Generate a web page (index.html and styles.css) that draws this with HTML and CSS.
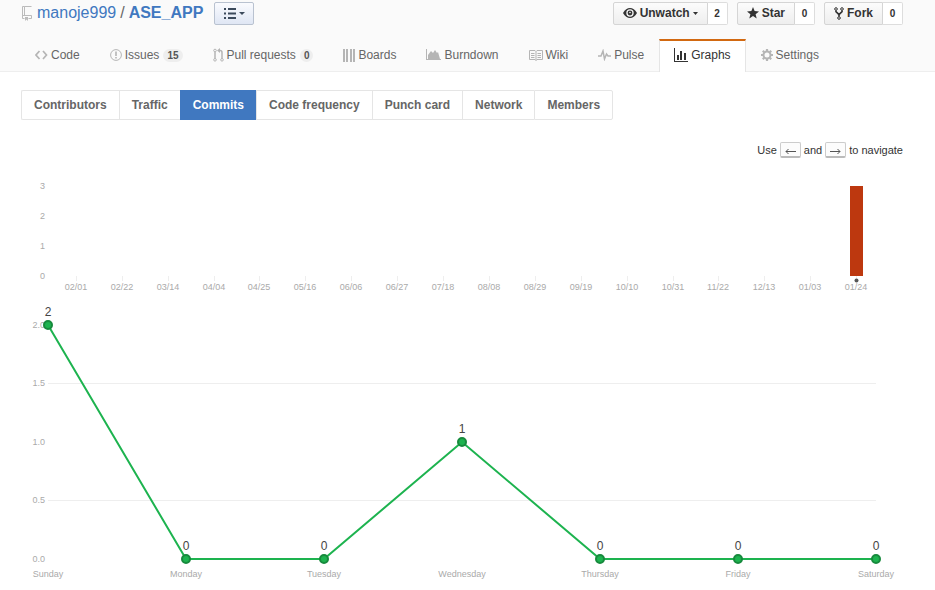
FILE: index.html
```html
<!DOCTYPE html>
<html lang="en">
<head>
<meta charset="utf-8">
<title>Commits · manoje999/ASE_APP</title>
<link rel="stylesheet" href="styles.css">
</head>
<body>
<header class="pagehead">
  <div class="titlebar">
    <h1 class="title">
      <svg class="repo" width="12" height="16" viewBox="0 0 12 16" fill="none" stroke="#bbb"><path d="M3.500 1.500h-2v12h2M3.500 1.500h7M3.500 1.500v9M1.500 10.500h9M10.500 10.500v3h-3"/><path d="M4 12h3v4l-1.500-1.500L4 16z" fill="#bbb" stroke="none"/></svg>
      <a href="#owner">manoje999</a><span class="slash">/</span><a class="name" href="#repo">ASE_APP</a>
    </h1>
    <button class="listbtn" type="button" aria-label="Lists">
      <svg width="12" height="11" viewBox="0 0 12 11" fill="#3c4a5c"><path d="M0 0h2v2H0zM4 0h8v2H4zM0 4.500h2v2H0zM4 4.500h8v2H4zM0 9h2v2H0zM4 9h8v2H4z"/></svg>
      <svg width="6" height="3" viewBox="0 0 6 3" fill="#3c4a5c"><path d="M0 0h6L3 3z"/></svg>
    </button>
    <div class="actions">
      <div class="action">
        <button type="button"><svg width="14" height="12" viewBox="0 0 14 12"><path d="M0 6C2 2.500 4.300 1 7 1s5 1.500 7 5c-2 3.500-4.300 5-7 5S2 9.500 0 6z" fill="#333"/><circle cx="7" cy="6" r="3.700" fill="#f5f5f5"/><circle cx="7" cy="6" r="2.400" fill="#333"/><circle cx="7" cy="5.500" r=".8" fill="#f5f5f5"/></svg>Unwatch<svg width="5" height="3" viewBox="0 0 5 3" fill="#333"><path d="M0 0h5L2.500 3z"/></svg></button><a href="#watchers">2</a>
      </div>
      <div class="action">
        <button type="button"><svg width="12" height="12" viewBox="0 0 12 12" fill="#333"><path d="M6 0l1.600 4.100 4.400.300-3.400 2.800L9.700 11.500 6 9.100 2.300 11.500 3.400 7.200 0 4.400l4.400-.300z"/></svg>Star</button><a href="#stars">0</a>
      </div>
      <div class="action">
        <button type="button"><svg width="10" height="13" viewBox="0 0 10 13" fill="none" stroke="#333"><circle cx="2" cy="2" r="1.300"/><circle cx="8" cy="2" r="1.300"/><circle cx="5" cy="11" r="1.300"/><path d="M2 3.500v1.200L5 7.500l3-2.800V3.500M5 7.500v2" stroke-width="1.700"/></svg>Fork</button><a href="#forks">0</a>
      </div>
    </div>
  </div>
  <nav class="reponav">
    <a href="#code"><svg width="13" height="10" viewBox="0 0 13 10" fill="none" stroke="#b5b5b5" stroke-width="1.700"><path d="M4.500 1L1 5l3.500 4M8 1l3.500 4L8 9"/></svg>Code</a>
    <a href="#issues"><svg width="12" height="12" viewBox="0 0 12 12" fill="none" stroke="#b5b5b5"><circle cx="6" cy="6" r="5.400"/><path d="M6 2.500v4.500M6 8v1.500" stroke-width="1.600"/></svg>Issues<span class="badge">15</span></a>
    <a href="#pulls"><svg width="11" height="14" viewBox="0 0 11 14" fill="none" stroke="#b5b5b5"><circle cx="2" cy="2.500" r="1.300"/><circle cx="2" cy="11.800" r="1.300"/><circle cx="9" cy="11.800" r="1.300"/><path d="M2 4v6.500M9 10.500V4.500Q9 2.500 7 2.500H6" stroke-width="1.500"/><path d="M7 0v5L4 2.500z" fill="#b5b5b5" stroke="none"/></svg>Pull requests<span class="badge">0</span></a>
    <a href="#boards"><svg width="12" height="13" viewBox="0 0 12 13" fill="#b5b5b5"><path d="M0 0h2v13H0zM3 0h2v13H3zM7 0h2v13H7zM10 0h2v13h-2z"/></svg>Boards</a>
    <a href="#burndown"><svg width="15" height="13" viewBox="0 0 15 13" fill="#b5b5b5"><path d="M0 0h1v10h14v1H0zM2 10V6L5 2l2 2 2-3 2 3 1-1 2 7z"/></svg>Burndown</a>
    <a href="#wiki"><svg width="14" height="11" viewBox="0 0 14 11" fill="none" stroke="#b5b5b5"><path d="M.5.5H6l1 1 1-1h5.500v9H8l-1 1-1-1H.5zM7 1.500v9M2 3.500h3.500M2 5.500h3.500M2 7.500h3.500M8.500 3.500H12M8.500 5.500H12M8.500 7.500H12"/></svg>Wiki</a>
    <a href="#pulse"><svg width="13" height="12" viewBox="0 0 13 12" fill="none" stroke="#b5b5b5" stroke-width="1.500"><path d="M0 7h3l2-5 1.500 8L8.500 5 10 7h3"/></svg>Pulse</a>
    <a class="active" href="#graphs" aria-current="page"><svg width="14" height="14" viewBox="0 0 14 14" fill="#333"><path d="M0 0h1v13h13v1H0zM3 7h2v5H3zM6 3h2v9H6zM10 5h2v7h-2z"/></svg>Graphs</a>
    <a href="#settings"><svg width="12" height="12" viewBox="0 0 12 12" fill="none" stroke="#b5b5b5"><circle cx="6" cy="6" r="3.500" stroke-width="2"/><path d="M6 0v2M6 10v2M0 6h2M10 6h2M1.800 1.800l1.400 1.400M8.800 8.800l1.400 1.400M1.800 10.200l1.400-1.400M8.800 3.200l1.400-1.400" stroke-width="2.200"/></svg>Settings</a>
  </nav>
</header>
<main>
  <nav class="subnav">
    <a href="#contributors">Contributors</a><a href="#traffic">Traffic</a><a class="selected" href="#commits" aria-current="page">Commits</a><a href="#frequency">Code frequency</a><a href="#punch">Punch card</a><a href="#network">Network</a><a href="#members">Members</a>
  </nav>
  <p class="hint">Use <kbd><svg width="11" height="6" viewBox="0 0 11 6" fill="none" stroke="#555"><path d="M11 3.500H1M3.500 1L1 3.500 3.500 6"/></svg></kbd> and <kbd><svg width="11" height="6" viewBox="0 0 11 6" fill="none" stroke="#555"><path d="M0 3.500h10M7.500 1L10 3.500 7.500 6"/></svg></kbd> to navigate</p>
  <svg class="chart" viewBox="21 174 882 126" role="img" aria-label="Commits per week">
    <g class="axis end"><text x="45" y="189">3</text><text x="45" y="219">2</text><text x="45" y="249">1</text><text x="45" y="279">0</text></g>
    <path class="grid" d="M76.500 276v5M122.500 276v5M168.500 276v5M214.500 276v5M259.500 276v5M305.500 276v5M351.500 276v5M397.500 276v5M443.500 276v5M489.500 276v5M535.500 276v5M581.500 276v5M627.500 276v5M673.500 276v5M718.500 276v5M764.500 276v5M810.500 276v5M856.500 276v5"/>
    <g class="axis"><text x="76" y="290">02/01</text><text x="122" y="290">02/22</text><text x="168" y="290">03/14</text><text x="214" y="290">04/04</text><text x="259" y="290">04/25</text><text x="305" y="290">05/16</text><text x="351" y="290">06/06</text><text x="397" y="290">06/27</text><text x="443" y="290">07/18</text><text x="489" y="290">08/08</text><text x="535" y="290">08/29</text><text x="581" y="290">09/19</text><text x="627" y="290">10/10</text><text x="673" y="290">10/31</text><text x="718" y="290">11/22</text><text x="764" y="290">12/13</text><text x="810" y="290">01/03</text><text x="856" y="290">01/24</text></g>
    <rect x="850" y="186" width="13" height="90" fill="#bd380f"/>
    <circle cx="856.500" cy="280.500" r="2" fill="#555"/>
  </svg>
  <svg class="chart" viewBox="21 300 882 286" role="img" aria-label="Commits per weekday">
    <path class="grid" d="M48 383.500h828M48 500.500h828"/>
    <g class="axis end"><text x="45" y="328">2.0</text><text x="45" y="386">1.5</text><text x="45" y="445">1.0</text><text x="45" y="503">0.5</text><text x="45" y="562">0.0</text></g>
    <g class="axis"><text x="48" y="577">Sunday</text><text x="186" y="577">Monday</text><text x="324" y="577">Tuesday</text><text x="462" y="577">Wednesday</text><text x="600" y="577">Thursday</text><text x="738" y="577">Friday</text><text x="876" y="577">Saturday</text></g>
    <path class="line" d="M48 325L186 559H324L462 442 600 559H876"/>
    <g class="dots"><circle cx="48" cy="325" r="4"/><circle cx="186" cy="559" r="4"/><circle cx="324" cy="559" r="4"/><circle cx="462" cy="442" r="4"/><circle cx="600" cy="559" r="4"/><circle cx="738" cy="559" r="4"/><circle cx="876" cy="559" r="4"/></g>
    <g class="values"><text x="48" y="316">2</text><text x="186" y="550">0</text><text x="324" y="550">0</text><text x="462" y="433">1</text><text x="600" y="550">0</text><text x="738" y="550">0</text><text x="876" y="550">0</text></g>
  </svg>
</main>
</body>
</html>
```
FILE: styles.css
```css
* { box-sizing: border-box; }
body {
  margin: 0;
  background: #fff;
  color: #333;
  font: 12px/16px "Liberation Sans", Arial, sans-serif;
}
a { color: #4078c0; text-decoration: none; }
svg { flex: none; }
button { font: inherit; cursor: pointer; }

.pagehead {
  padding: 0 32px 0 21px;
  background: #fafafa;
  border-bottom: 1px solid #eee;
}
.titlebar { display: flex; align-items: center; height: 26px; }
.title {
  display: flex;
  align-items: center;
  margin: 0;
  font-size: 16px;
  line-height: 24px;
  font-weight: normal;
}
.repo { margin-right: 4px; }
.slash { margin: 0 4px; color: #666; }
.name { font-weight: bold; }
.listbtn {
  display: flex;
  align-items: center;
  justify-content: center;
  gap: 3px;
  width: 40px;
  height: 23px;
  margin-left: 11px;
  padding: 0;
  border: 1px solid #b9c2d0;
  border-radius: 2px;
  background: linear-gradient(#fafbfe, #dfe6f4);
}
.actions { display: flex; gap: 9px; margin-left: auto; }
.action { display: flex; height: 23px; font-weight: bold; }
.action button {
  display: flex;
  align-items: center;
  gap: 3px;
  padding: 0 9px;
  border: 1px solid #d5d5d5;
  border-radius: 2px 0 0 2px;
  background: linear-gradient(#fcfcfc, #eee);
  color: #333;
}
.action a {
  width: 20px;
  border: 1px solid #ddd;
  border-left: 0;
  border-radius: 0 2px 2px 0;
  background: #fff;
  color: #333;
  font-size: 10px;
  line-height: 21px;
  text-align: center;
}

.reponav { display: flex; margin: 13px 0 0 -1px; }
.reponav a {
  display: flex;
  align-items: center;
  gap: 3px;
  height: 32px;
  padding: 0 14px 2px;
  border: 1px solid transparent;
  border-top: 2px solid transparent;
  border-bottom: 0;
  color: #666;
}
.reponav .active {
  margin-bottom: -1px;
  height: 33px;
  padding-bottom: 3px;
  border-color: #d26911 #e5e5e5;
  background: #fff;
  color: #333;
}
.badge {
  margin-left: 1px;
  padding: 0 4px;
  border-radius: 8px;
  background: #eee;
  color: #555;
  font-size: 10px;
  line-height: 13px;
  font-weight: bold;
}

main { padding: 18px 32px 0 21px; }
.subnav { display: flex; }
.subnav a {
  padding: 6px 12px;
  border: 1px solid #e5e5e5;
  border-right: 0;
  color: #666;
  font-weight: bold;
}
.subnav a:first-child { border-radius: 2px 0 0 2px; }
.subnav a:last-child { border-right: 1px solid #e5e5e5; border-radius: 0 2px 2px 0; }
.subnav .selected { border-color: #4078c0; background: #4078c0; color: #fff; }

.hint {
  display: flex;
  align-items: center;
  justify-content: flex-end;
  gap: 3px;
  margin: 22px 0 16px;
  font-size: 11px;
}
kbd {
  display: flex;
  align-items: center;
  justify-content: center;
  width: 21px;
  height: 16px;
  padding-top: 2px;
  border: 1px solid #ccc;
  border-bottom: 2px solid #bbb;
  border-radius: 2px;
  background: #fcfcfc;
}

.chart { display: block; width: 100%; overflow: visible; }
.axis { fill: #aaa; font-size: 9px; text-anchor: middle; }
.end { text-anchor: end; }
.grid { fill: none; stroke: #eee; }
.line { fill: none; stroke: #1db34f; stroke-width: 2; }
.dots { fill: #1db34f; stroke: #178a3d; stroke-width: 2; }
.values { fill: #444; font-size: 12px; text-anchor: middle; }
```
